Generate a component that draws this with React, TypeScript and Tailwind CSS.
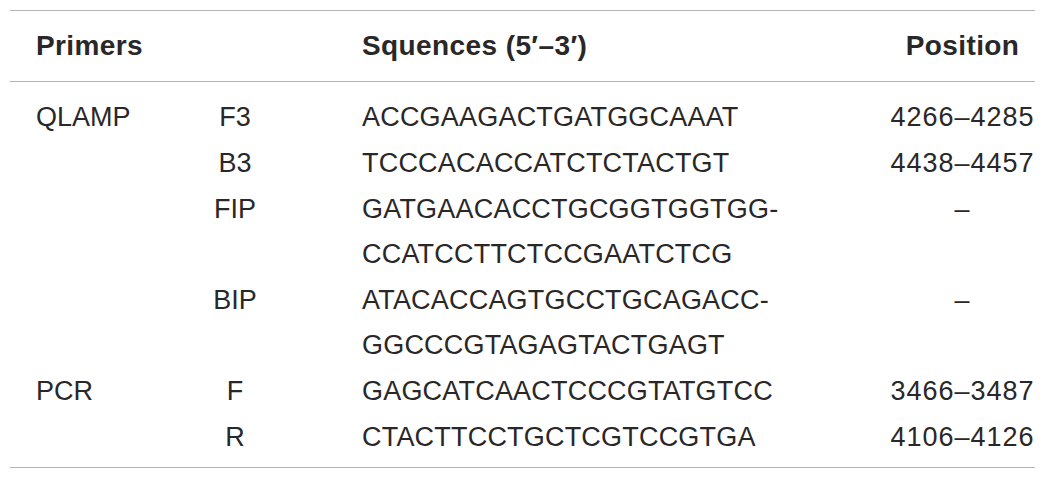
type Row = {
  group: string;
  name: string;
  seq: string[];
  pos: string;
};

const rows: Row[] = [
  { group: 'QLAMP', name: 'F3', seq: ['ACCGAAGACTGATGGCAAAT'], pos: '4266–4285' },
  { group: '', name: 'B3', seq: ['TCCCACACCATCTCTACTGT'], pos: '4438–4457' },
  { group: '', name: 'FIP', seq: ['GATGAACACCTGCGGTGGTGG-', 'CCATCCTTCTCCGAATCTCG'], pos: '–' },
  { group: '', name: 'BIP', seq: ['ATACACCAGTGCCTGCAGACC-', 'GGCCCGTAGAGTACTGAGT'], pos: '–' },
  { group: 'PCR', name: 'F', seq: ['GAGCATCAACTCCCGTATGTCC'], pos: '3466–3487' },
  { group: '', name: 'R', seq: ['CTACTTCCTGCTCGTCCGTGA'], pos: '4106–4126' },
];

const cols = 'grid grid-cols-[170px_110px_600px_145px]';

function App() {
  return (
    <div
      className="w-[1050px] h-[480px] bg-white pt-[10px] pl-[10px] text-[#2a2728]"
      style={{ fontFamily: '"Liberation Sans", Arial, sans-serif' }}
    >
      <div className="w-[1025px] border-t border-b border-[#b4b4b4]">
        <div className={`${cols} h-[71px] items-center border-b border-[#b4b4b4] text-[28px] font-bold tracking-[0.4px]`}>
          <div className="pl-[26px]">Primers</div>
          <div></div>
          <div className="pl-[72px] whitespace-nowrap">Squences (5′–3′)</div>
          <div className="text-center whitespace-nowrap">Position</div>
        </div>
        <div className="pt-[12px] pb-[7px] text-[27px] leading-[45px]">
          {rows.map((r) => (
            <div key={r.name} className={`${cols} py-[0.5px]`}>
              <div className="pl-[26px]">{r.group}</div>
              <div className="text-center">{r.name}</div>
              <div className="pl-[72px] tracking-[0.2px] whitespace-nowrap">
                {r.seq.map((s) => (
                  <div key={s}>{s}</div>
                ))}
              </div>
              <div className="flex justify-center tracking-[1px] whitespace-nowrap">{r.pos}</div>
            </div>
          ))}
        </div>
      </div>
    </div>
  );
}

export default App;
